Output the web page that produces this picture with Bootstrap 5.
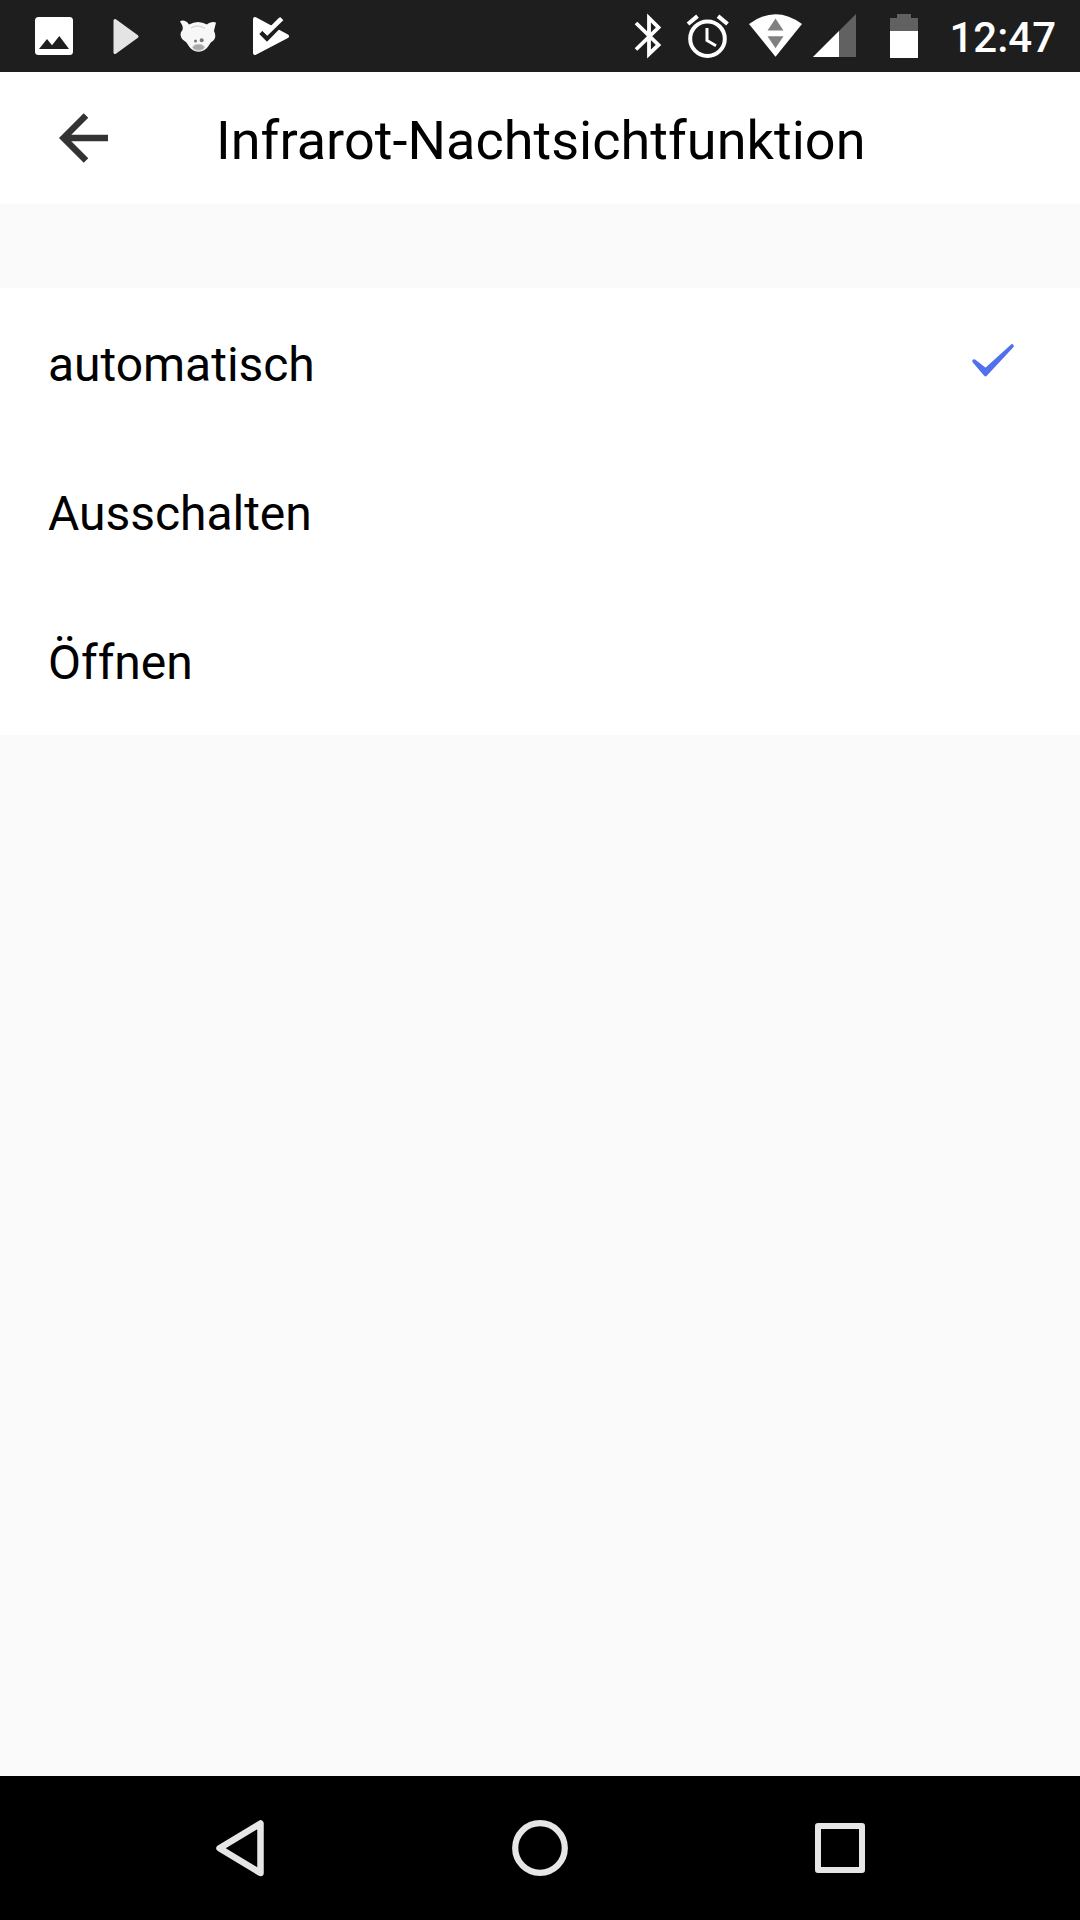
<!DOCTYPE html>
<html lang="de">
<head>
<meta charset="utf-8">
<meta name="viewport" content="width=device-width, initial-scale=1">
<title>Infrarot-Nachtsichtfunktion</title>
<link href="https://cdn.jsdelivr.net/npm/bootstrap@5.3.0/dist/css/bootstrap.min.css" rel="stylesheet">
<style>
  body { font-family: Roboto, "Noto Sans", sans-serif; background: #fafafa; color: #000; }
  svg { display: block; flex: none; }
  .statusbar { height: 72px; background: #1e1e1e; padding-left: 18px; padding-right: 24px; }
  .clock { font-size: 42px; font-weight: 500; line-height: 72px; padding-top: 2px; height: 72px; margin-left: -1px; }
  .titlebar { height: 132px; }
  .titlebar .back { width: 216px; }
  .titlebar h1 { font-size: 54px; font-weight: 400; line-height: 132px; padding-top: 3px; height: 132px; letter-spacing: .04px; }
  .options { margin-top: 84px; --bs-list-group-bg: #fff; }
  .options .list-group-item { height: 149px; padding: 0 48px; font-size: 48px; line-height: 149px; color: #000; border: 0; }
  .options .caption { padding-top: 2px; height: 149px; letter-spacing: -.03px; }
  .sysnav { height: 144px; padding: 0 90px; }
</style>
<script src="https://cdn.jsdelivr.net/npm/bootstrap@5.3.0/dist/js/bootstrap.bundle.min.js" defer></script>
</head>
<body>
<div class="d-flex flex-column vh-100 overflow-hidden">
  <div class="statusbar d-flex justify-content-between text-white">
    <div class="d-flex">
      <svg width="72" height="72" viewBox="18 0 72 72"><rect x="35" y="17" width="38" height="38" rx="3.5" fill="#fff"/><path d="M39 49l8-10 5 6.3 7.300-9.300L69 49z" fill="#1e1e1e"/></svg>
      <svg width="72" height="72" viewBox="90 0 72 72"><path d="M115 20.500L137 36.500 115 52.500z" fill="#e4e4e4" stroke="#e4e4e4" stroke-width="3" stroke-linejoin="round"/></svg>
      <svg width="72" height="72" viewBox="162 0 72 72">
        <path d="M180 21.500C182 19.500 187 21 189 24.500Q198 19.500 207 24.500C209 22.500 213 21 216 22.500C215.500 25 214.500 28 214 31Q217 37 213 41C209 42 208.500 51.500 198.500 51.700C189 51.500 188 42 184.500 41C180 38 179.500 33 182.500 30C183.500 27 182 24.500 180 21.500z" fill="#f7f7f7"/>
        <path d="M191 28q7-4.500 14 .5" fill="none" stroke="#d4d4d4" stroke-width="1.300"/>
        <circle cx="195.500" cy="41" r="1.500" fill="#777"/><circle cx="201.700" cy="40.300" r="2" fill="#777"/>
        <ellipse cx="198.500" cy="47.300" rx="5.700" ry="3" fill="#a8a8a8" stroke="#c8c8c8"/>
      </svg>
      <svg width="72" height="72" viewBox="234 0 72 72">
        <path d="M255 19L287 36.200 255 53z" fill="#fff" stroke="#fff" stroke-width="4" stroke-linejoin="round"/>
        <path d="M259.300 34l3.200-3.200 4.500 4.500L284 18.500l6 8-10.500 2.500L267 41.700z" fill="#1e1e1e"/>
        <path d="M271.500 25.300l7.500-7.500 1.500-.5 2.800 3-16 15.500-6-6z" fill="#fff"/>
      </svg>
    </div>
    <div class="d-flex">
      <svg width="56" height="72" viewBox="620 0 56 72"><path d="M636 23L658.500 45 649 54V18L658.500 27.500 636 49.500" fill="none" stroke="#fff" stroke-width="3.800"/></svg>
      <svg width="64" height="72" viewBox="676 0 64 72" fill="none" stroke="#fff"><circle cx="707.500" cy="38.700" r="17.300" stroke-width="4"/><path d="M688 24l9.500-7.800M718 16.200l9.500 7.800" stroke-width="4.200"/><path d="M707 28v12.500l9 5.300" stroke-width="3"/></svg>
      <svg width="72" height="72" viewBox="740 0 72 72"><path d="M749 24Q775.500 4.500 802 24L775.500 56.800z" fill="#fff"/><path d="M775.500 18.500l8 12h-16zM767.500 36.300h16l-8 12z" fill="#808080"/></svg>
      <svg width="58" height="72" viewBox="812 0 58 72"><path d="M813 57h43V14z" fill="#616161"/><path d="M813 57h26V31z" fill="#fff"/></svg>
      <svg width="80" height="72" viewBox="870 0 80 72"><path d="M890 31V18h7v-4h14v4h7v13z" fill="#616161"/><path d="M890 31h28v27h-28z" fill="#fff"/></svg>
      <div class="clock">12:47</div>
    </div>
  </div>

  <header class="titlebar bg-white d-flex">
    <a href="#" class="back" aria-label="Zurück"><svg width="132" height="132" viewBox="0 72 132 132"><path d="M108 138H64M86 115.500L63.500 138 86 160.500" fill="none" stroke="#333" stroke-width="6.400"/></svg></a>
    <h1 class="m-0">Infrarot-Nachtsichtfunktion</h1>
  </header>

  <div class="options list-group list-group-flush">
    <div class="list-group-item d-flex justify-content-between align-items-center">
      <span class="caption">automatisch</span>
      <svg width="78" height="149" viewBox="954 288 78 149"><path d="M974 361L985.500 370 1012 346 985.500 374.500z" fill="#5170ee" stroke="#5170ee" stroke-width="3.600" stroke-linejoin="round"/></svg>
    </div>
    <div class="list-group-item"><div class="caption">Ausschalten</div></div>
    <div class="list-group-item"><div class="caption">Öffnen</div></div>
  </div>

  <nav class="sysnav bg-black d-flex justify-content-around align-items-center mt-auto">
    <svg width="72" height="144" viewBox="204 1776 72 144"><path d="M219.500 1848.300L260.500 1823.500V1873z" fill="none" stroke="#e6e6e6" stroke-width="6.500" stroke-linejoin="round"/></svg>
    <svg width="72" height="144" viewBox="504 1776 72 144"><circle cx="540" cy="1848" r="24.800" fill="none" stroke="#e6e6e6" stroke-width="6.200"/></svg>
    <svg width="72" height="144" viewBox="804 1776 72 144"><path d="M818 1826h44v44h-44z" fill="none" stroke="#e6e6e6" stroke-width="6" stroke-linejoin="round"/></svg>
  </nav>
</div>
</body>
</html>
